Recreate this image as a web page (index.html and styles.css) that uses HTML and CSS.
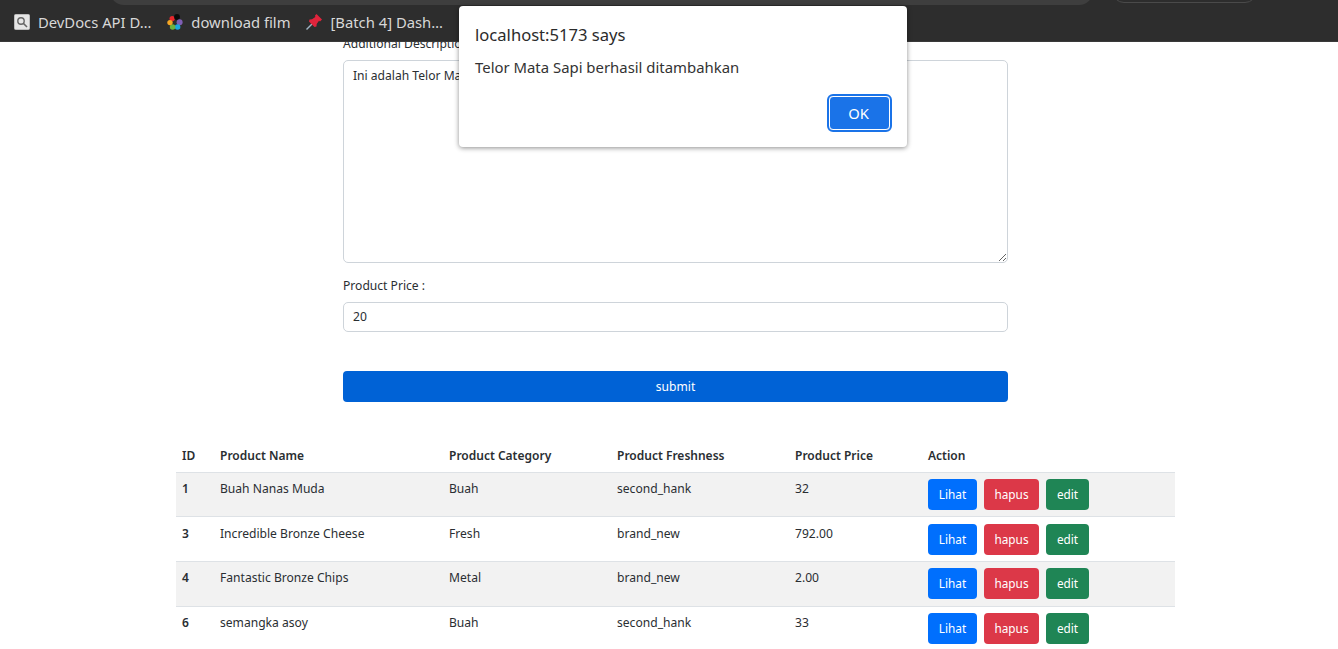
FILE: index.html
```html
<!DOCTYPE html>
<html lang="en">
<head>
  <meta charset="UTF-8" />
  <meta name="viewport" content="width=device-width, initial-scale=1.0" />
  <title>Product List</title>
  <link rel="stylesheet" href="styles.css">
</head>
<body>
  <div class="toolbar-edge">
    <div class="url-pill"></div>
    <div class="profile-pill"></div>
  </div>

  <nav class="bookmarks">
    <a class="bookmark">
      <svg class="fav" viewBox="0 0 16 16">
        <rect x="0.5" y="0.5" width="15" height="15" rx="1" fill="#e6e6e6" stroke="#bdbdbd"/>
        <circle cx="7" cy="7" r="3.2" fill="none" stroke="#666" stroke-width="1.4"/>
        <path d="M9.5 9.5L13 13" stroke="#666" stroke-width="1.6"/>
      </svg>
      <span>DevDocs API D…</span>
    </a>
    <a class="bookmark">
      <svg class="fav" viewBox="0 0 16 16">
        <circle cx="5.2" cy="4.6" r="2.7" fill="#e8262b"/>
        <circle cx="10" cy="3" r="2.9" fill="#0b0b0b"/>
        <circle cx="12.6" cy="8.2" r="3" fill="#7f5fb5"/>
        <circle cx="10.6" cy="13" r="2.8" fill="#1ca8e0"/>
        <circle cx="5.6" cy="13" r="2.8" fill="#6cb33f"/>
        <circle cx="3" cy="8.6" r="2.7" fill="#f5a623"/>
      </svg>
      <span>download film</span>
    </a>
    <a class="bookmark">
      <svg class="fav" viewBox="0 0 16 16">
        <path d="M0.5 15.5L6 10" stroke="#9fb4c4" stroke-width="1.4"/>
        <path d="M10.5 0L16 5.5L14 7.5L13 6.7L10.7 10L10.5 12.5L8.5 13L3 7.5L3.5 5.5L6 5.3L9.3 3L9 1.5z" fill="#e0243c"/>
      </svg>
      <span>[Batch 4] Dash…</span>
    </a>
  </nav>

  <main class="page">
    <form class="product-form">
      <label class="field-label">Additional Description :</label>
      <textarea class="field field-area">Ini adalah Telor Mata Sapi</textarea>
      <label class="field-label">Product Price :</label>
      <input class="field" type="text" value="20">
      <button class="submit-btn" type="button">submit</button>
    </form>

    <table class="product-table">
      <colgroup>
        <col class="col-id"><col class="col-name"><col class="col-cat"><col class="col-fresh"><col class="col-price"><col>
      </colgroup>
      <thead>
        <tr>
          <th>ID</th>
          <th>Product Name</th>
          <th>Product Category</th>
          <th>Product Freshness</th>
          <th>Product Price</th>
          <th>Action</th>
        </tr>
      </thead>
      <tbody>
        <tr>
          <th>1</th><td>Buah Nanas Muda</td><td>Buah</td><td>second_hank</td><td>32</td>
          <td class="actions"><button class="btn btn-blue">Lihat</button><button class="btn btn-red">hapus</button><button class="btn btn-green">edit</button></td>
        </tr>
        <tr>
          <th>3</th><td>Incredible Bronze Cheese</td><td>Fresh</td><td>brand_new</td><td>792.00</td>
          <td class="actions"><button class="btn btn-blue">Lihat</button><button class="btn btn-red">hapus</button><button class="btn btn-green">edit</button></td>
        </tr>
        <tr>
          <th>4</th><td>Fantastic Bronze Chips</td><td>Metal</td><td>brand_new</td><td>2.00</td>
          <td class="actions"><button class="btn btn-blue">Lihat</button><button class="btn btn-red">hapus</button><button class="btn btn-green">edit</button></td>
        </tr>
        <tr>
          <th>6</th><td>semangka asoy</td><td>Buah</td><td>second_hank</td><td>33</td>
          <td class="actions"><button class="btn btn-blue">Lihat</button><button class="btn btn-red">hapus</button><button class="btn btn-green">edit</button></td>
        </tr>
      </tbody>
    </table>
  </main>

  <div class="dialog">
    <div class="dialog-title">localhost:5173 says</div>
    <div class="dialog-text">Telor Mata Sapi berhasil ditambahkan</div>
    <div class="dialog-actions">
      <button class="dialog-ok" type="button">OK</button>
    </div>
  </div>
</body>
</html>
```

FILE: styles.css
```css
* {
  box-sizing: border-box;
}

html, body {
  height: 649px;
  overflow: hidden;
}

body {
  margin: 0;
  background-color: #ffffff;
  color: #2a2e32;
  font-family: "Noto Sans", "Open Sans", sans-serif;
  font-size: 12.1px;
}

.toolbar-edge {
  height: 5px;
  background-color: #2d2d2d;
  display: flex;
  align-items: flex-end;
  overflow: hidden;
  padding-left: 110px;
}

.url-pill {
  width: 983px;
  height: 30px;
  flex: none;
  background-color: #3e3e3e;
  border-radius: 0 0 14px 14px;
}

.profile-pill {
  width: 145px;
  height: 30px;
  flex: none;
  margin-left: 19px;
  margin-bottom: 2px;
  border: 1px solid #4a4a4a;
  border-radius: 0 0 12px 12px;
}

.bookmarks {
  height: 37px;
  background-color: #2d2d2d;
  border-bottom: 1px solid #3a3a3a;
  display: flex;
  align-items: center;
  gap: 16px;
  padding: 0 0 2px 14px;
  position: relative;
  z-index: 1;
}

.bookmark {
  display: flex;
  align-items: center;
  gap: 8px;
  color: #d8d8d8;
  font-size: 14.8px;
  white-space: nowrap;
}

.fav {
  width: 16px;
  height: 16px;
  flex: none;
}

.page {
  width: 999px;
  margin-left: 176px;
  margin-top: -7px;
}

.product-form {
  width: 665px;
  margin: 0 auto;
}

.field-label {
  display: block;
  height: 18px;
  line-height: 18px;
  margin-bottom: 7px;
}

.field {
  display: block;
  width: 100%;
  height: 30px;
  padding: 0 9px 2px;
  border: 1px solid #ced4da;
  border-radius: 5px;
  color: #2a2e32;
  background-color: #ffffff;
  font-family: inherit;
  font-size: 12.1px;
}

.field-area {
  height: 203px;
  padding: 6px 9px;
  margin-bottom: 14px;
  resize: vertical;
}

.submit-btn {
  display: block;
  width: 100%;
  height: 31px;
  margin-top: 39px;
  border: none;
  border-radius: 4px;
  background-color: #0062d6;
  color: #ffffff;
  font-family: inherit;
  font-size: 12.1px;
}

.product-table {
  width: 999px;
  margin-top: 38px;
  border-collapse: collapse;
  table-layout: fixed;
}

.col-id { width: 38px; }
.col-name { width: 229px; }
.col-cat { width: 168px; }
.col-fresh { width: 178px; }
.col-price { width: 133px; }

.product-table th,
.product-table td {
  padding: 7px 6px 0;
  text-align: left;
  vertical-align: top;
  height: 45px;
  line-height: 18px;
  border-bottom: 1px solid #dee2e6;
}

.product-table th {
  font-weight: 600;
  font-size: 12px;
}

.product-table thead th {
  height: 32px;
  padding-top: 7px;
}

.product-table tbody tr:nth-child(odd) {
  background-color: #f2f2f2;
}

.product-table tbody tr:first-child th,
.product-table tbody tr:first-child td {
  height: 44px;
}

.product-table tbody tr:last-child th,
.product-table tbody tr:last-child td {
  border-bottom: none;
}

.product-table .actions {
  padding-top: 6px;
  white-space: nowrap;
}

.product-table tbody tr:nth-child(2) th,
.product-table tbody tr:nth-child(2) td {
  padding-top: 8px;
}

.product-table tbody tr:nth-child(2) .actions {
  padding-top: 7px;
}

.btn {
  height: 31px;
  padding: 0;
  margin-right: 7px;
  border: none;
  border-radius: 4px;
  color: #ffffff;
  font-family: inherit;
  font-size: 11.8px;
  vertical-align: top;
}

.btn-blue { width: 49px; background-color: #006ffd; }
.btn-red { width: 55px; background-color: #dc3848; }
.btn-green { width: 43px; background-color: #1f8555; }

.dialog {
  position: absolute;
  left: 459px;
  top: 6px;
  width: 448px;
  height: 141px;
  padding: 16px;
  background-color: #ffffff;
  border-radius: 4px;
  box-shadow: 0 1px 5px rgba(0, 0, 0, 0.45);
  z-index: 5;
}

.dialog-title {
  font-size: 16.6px;
  line-height: 26px;
  color: #2b2b2b;
}

.dialog-text {
  margin-top: 9px;
  font-size: 14.9px;
  line-height: 20px;
  color: #333333;
}

.dialog-actions {
  display: flex;
  justify-content: flex-end;
  margin-top: 19px;
}

.dialog-ok {
  width: 61px;
  height: 34px;
  margin-right: 1px;
  padding: 0 2px 0 0;
  background-color: #1a73e8;
  border: 1px solid #ffffff;
  outline: 2px solid #1a73e8;
  border-radius: 4px;
  color: #ffffff;
  font-family: inherit;
  font-size: 14.75px;
}
```
